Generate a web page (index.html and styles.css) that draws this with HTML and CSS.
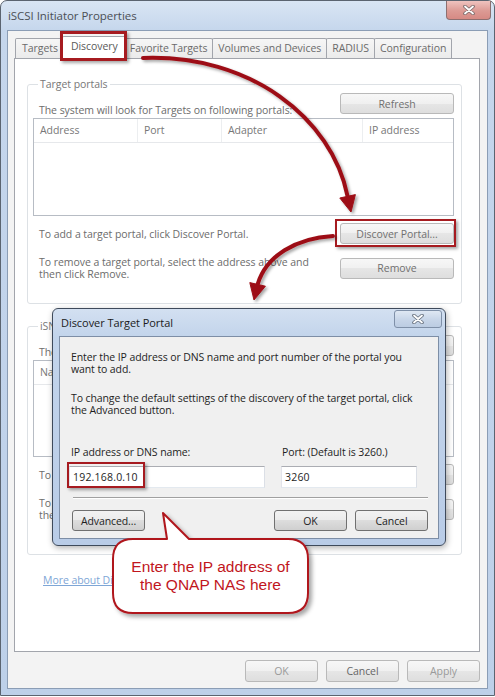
FILE: index.html
```html
<!DOCTYPE html>
<html lang="en">
<head>
<meta charset="UTF-8">
<meta name="viewport" content="width=device-width, initial-scale=1.0">
<title>iSCSI Initiator Properties</title>
<link rel="stylesheet" href="styles.css">
</head>
<body>
<div class="window">
    <div class="titlebar">
        <span class="title">iSCSI Initiator Properties</span>
        <span class="close-btn">
            <svg width="14" height="10" viewBox="0 0 14 10"><path class="x-out" d="M3 1.5 L11 8.5 M11 1.5 L3 8.5"/><path class="x-in" d="M3 1.5 L11 8.5 M11 1.5 L3 8.5"/></svg>
        </span>
    </div>
    <div class="client">
        <div class="tabs">
            <div class="tab">Targets</div>
            <div class="tab active">Discovery</div>
            <div class="tab">Favorite Targets</div>
            <div class="tab">Volumes and Devices</div>
            <div class="tab">RADIUS</div>
            <div class="tab">Configuration</div>
        </div>
        <div class="page">
            <fieldset class="group group-portals">
                <legend>Target portals</legend>
                <div class="row row-top">
                    <span class="note">The system will look for Targets on following portals:</span>
                    <button class="btn">Refresh</button>
                </div>
                <div class="listview">
                    <div class="lv-head cols-portals">
                        <span>Address</span><span>Port</span><span>Adapter</span><span>IP address</span>
                    </div>
                </div>
                <div class="row row-add">
                    <span class="note">To add a target portal, click Discover Portal.</span>
                    <button class="btn">Discover Portal...</button>
                </div>
                <div class="row row-remove">
                    <span class="note">To remove a target portal, select the address above and<br>then click Remove.</span>
                    <button class="btn">Remove</button>
                </div>
            </fieldset>
            <fieldset class="group group-isns">
                <legend>iSNS servers</legend>
                <div class="row row-top">
                    <span class="note">The system is registered on the following iSNS servers:</span>
                    <button class="btn">Refresh</button>
                </div>
                <div class="listview">
                    <div class="lv-head cols-isns">
                        <span>Name</span>
                    </div>
                </div>
                <div class="row row-add">
                    <span class="note">To add an iSNS server, click Add Server.</span>
                    <button class="btn">Add Server...</button>
                </div>
                <div class="row row-remove">
                    <span class="note">To remove an iSNS server, select the server above and<br>then click Remove.</span>
                    <button class="btn">Remove</button>
                </div>
            </fieldset>
            <a class="more-link" href="#">More about Discovery and iSNS</a>
        </div>
        <div class="footer">
            <button class="btn off">OK</button>
            <button class="btn">Cancel</button>
            <button class="btn off">Apply</button>
        </div>
    </div>
</div>

<div class="mark mark-tab"></div>
<div class="mark mark-discover"></div>

<svg class="arrows" width="495" height="697" viewBox="0 0 495 697">
    <defs>
        <filter id="shade" x="-20%" y="-20%" width="140%" height="140%">
            <feDropShadow dx="2" dy="2" stdDeviation="1.5" flood-color="#000" flood-opacity="0.35"/>
        </filter>
    </defs>
    <g filter="url(#shade)">
        <path class="arrow-line" d="M143 58 C 250 54, 332 118, 347.6 196.3"/>
        <polygon class="arrow-head" points="351,212 355.4,194.6 339.8,198"/>
        <path class="arrow-line" d="M333 236 C 296 238, 266 256, 257.6 284.4"/>
        <polygon class="arrow-head" points="254,300 265.4,286.2 249.8,282.6"/>
    </g>
</svg>

<div class="dialog">
    <div class="dlg-titlebar">
        <span class="dlg-title">Discover Target Portal</span>
        <span class="dlg-close">
            <svg width="14" height="10" viewBox="0 0 14 10"><path class="x-out" d="M3 1.5 L11 8.5 M11 1.5 L3 8.5"/><path class="x-in" d="M3 1.5 L11 8.5 M11 1.5 L3 8.5"/></svg>
        </span>
    </div>
    <div class="dlg-client">
        <p class="dlg-text">Enter the IP address or DNS name and port number of the portal you<br>want to add.</p>
        <p class="dlg-text second">To change the default settings of the discovery of the target portal, click<br>the Advanced button.</p>
        <div class="fields">
            <label class="field-label">IP address or DNS name:</label>
            <label class="field-label port-label">Port: (Default is 3260.)</label>
            <input class="textbox" type="text" value="192.168.0.10">
            <input class="textbox" type="text" value="3260">
        </div>
        <div class="separator"></div>
        <div class="dlg-buttons">
            <button class="btn dbtn">Advanced...</button>
            <span class="spacer"></span>
            <button class="btn dbtn">OK</button>
            <button class="btn dbtn">Cancel</button>
        </div>
    </div>
</div>

<div class="mark mark-ip"></div>

<svg class="callout-shape" width="495" height="697" viewBox="0 0 495 697">
    <defs>
        <filter id="bubble-shade" x="-20%" y="-20%" width="140%" height="150%">
            <feDropShadow dx="3" dy="3" stdDeviation="2" flood-color="#000" flood-opacity="0.35"/>
        </filter>
    </defs>
    <path filter="url(#bubble-shade)" d="M133 539 L167 539 L163 513 L189 539 L288 539 Q308 539 308 559 L308 593 Q308 613 288 613 L133 613 Q113 613 113 593 L113 559 Q113 539 133 539 Z"/>
</svg>
<div class="callout-text">Enter the IP address of<br>the QNAP NAS here</div>
</body>
</html>
```

FILE: styles.css
```css
* {
    box-sizing: border-box;
}

body {
    position: relative;
    margin: 0;
    width: 495px;
    height: 697px;
    overflow: hidden;
    background: #ffffff;
    font-family: "Open Sans", "Noto Sans", sans-serif;
    font-size: 10.5px;
    line-height: 12px;
    letter-spacing: -0.05px;
    color: #6c6c6c;
}

/* main window */
.window {
    display: flex;
    flex-direction: column;
    width: 495px;
    height: 696px;
    padding: 0 6px 6px 6px;
    border: 1px solid #5b6470;
    border-radius: 7px 7px 0 0;
    background: linear-gradient(to bottom, #d9e5f4 0, #c5d6ec 30px, #bdd0e9 100%);
}

.titlebar {
    display: flex;
    align-items: flex-start;
    height: 29px;
    flex-shrink: 0;
}

.title {
    padding-left: 1px;
    line-height: 29px;
    font-size: 11.5px;
    color: #4b4f55;
}

.close-btn {
    display: flex;
    align-items: center;
    justify-content: center;
    width: 45px;
    height: 19px;
    margin-left: auto;
    margin-right: -3px;
    border: 1px solid #8d6f70;
    border-top: none;
    border-radius: 0 0 4px 4px;
    background: linear-gradient(to bottom, #efc3bf, #dc9a94 55%, #d68a84);
}

.x-out {
    fill: none;
    stroke: #7b6a6a;
    stroke-width: 3.6;
    stroke-linecap: round;
}

.x-in {
    fill: none;
    stroke: #ffffff;
    stroke-width: 1.8;
    stroke-linecap: round;
}

.client {
    display: flex;
    flex-direction: column;
    flex: 1;
    padding: 0 7px 6px 6px;
    border: 1px solid #8b9db5;
    background: #f3f3f3;
}

/* tabs */
.tabs {
    position: relative;
    z-index: 2;
    display: flex;
    align-items: flex-end;
    height: 28px;
    margin-bottom: -1px;
    padding-left: 1px;
}

.tab {
    height: 20px;
    margin-bottom: 1px;
    padding: 0 5px;
    border: 1px solid #a2a5ac;
    border-bottom: none;
    border-radius: 2px 2px 0 0;
    background: linear-gradient(to bottom, #f6f6f6, #ebebeb);
    line-height: 19px;
    color: #6a6a6a;
    white-space: nowrap;
}

.tab:first-child {
    padding: 0 6px;
}

.tab + .tab {
    margin-left: -1px;
}

.tab.active {
    position: relative;
    z-index: 3;
    height: 23px;
    margin: 0 -2px 0 -3px;
    padding: 0 8px;
    background: #ffffff;
    line-height: 19px;
    color: #5a5a5a;
}

.page {
    flex: 1;
    padding: 18px 17px 0 12px;
    border: 1px solid #a2a5ac;
    background: #ffffff;
}

/* group boxes */
.group {
    margin: 0;
    padding: 2px 7px 23px 5px;
    border: 1px solid #dde1e5;
    border-radius: 3px;
}

.group legend {
    margin-left: 5px;
    padding: 0 2px;
    line-height: 14px;
    color: #777777;
}

.group-isns {
    margin-top: 15px;
    padding-bottom: 33px;
}

.row {
    display: flex;
    justify-content: space-between;
    align-items: center;
}

.note {
    padding-left: 6px;
}

.row-top .note {
    align-self: flex-end;
    margin-bottom: -2px;
}

.row-add {
    margin-top: 7px;
}

.row-remove {
    margin-top: 12px;
}

.btn {
    width: 114px;
    height: 21px;
    padding: 0;
    border: 1px solid #b9b9b9;
    border-radius: 3px;
    background: linear-gradient(to bottom, #f7f7f7, #f0f0f0 50%, #e6e6e6 50%, #dedede);
    font-family: inherit;
    font-size: 10.5px;
    letter-spacing: inherit;
    color: #707070;
}

.listview {
    height: 98px;
    margin-top: 4px;
    border: 1px solid #b7bcc4;
    background: #ffffff;
}

.group-isns .listview {
    height: 97px;
}

.lv-head {
    display: grid;
    height: 24px;
    border-bottom: 1px solid #e6e8eb;
    line-height: 23px;
    color: #777777;
}

.lv-head span {
    padding-left: 6px;
    border-right: 1px solid #eceef0;
}

.lv-head span:last-child {
    border-right: none;
}

.cols-portals {
    grid-template-columns: 104px 84px 141px 1fr;
}

.cols-isns {
    grid-template-columns: 1fr;
}

.more-link {
    display: block;
    width: max-content;
    margin: 19px 0 0 16px;
    color: #7ea6d6;
    text-decoration: underline;
}

.footer {
    display: flex;
    justify-content: flex-end;
    gap: 8px;
    margin-top: 8px;
}

.footer .btn {
    width: 73px;
    height: 22px;
    color: #666666;
}

.footer .btn.off {
    color: #9a9a9a;
}

/* red highlight boxes */
.mark {
    position: absolute;
    border: 2px solid #a61b20;
    box-shadow: 2px 2px 3px rgba(0, 0, 0, 0.35);
    z-index: 5;
}

.mark-tab {
    left: 60px;
    top: 31px;
    width: 67px;
    height: 30px;
    border-width: 3px;
}

.mark-discover {
    left: 335px;
    top: 219px;
    width: 121px;
    height: 28px;
}

.mark-ip {
    left: 67px;
    top: 462px;
    width: 78px;
    height: 26px;
    z-index: 12;
}

.arrows {
    position: absolute;
    left: 0;
    top: 0;
    z-index: 6;
}

.arrow-line {
    fill: none;
    stroke: #9d1016;
    stroke-width: 4;
    stroke-linecap: round;
}

.arrow-head {
    fill: #9d1016;
    stroke: #9d1016;
    stroke-width: 1;
    stroke-linejoin: round;
}

/* discover target portal dialog */
.dialog {
    position: absolute;
    left: 52px;
    top: 308px;
    z-index: 10;
    display: flex;
    flex-direction: column;
    width: 394px;
    height: 238px;
    padding: 0 6px 6px 6px;
    border: 1px solid #3e4a5b;
    border-radius: 6px;
    background: linear-gradient(to bottom, #d3e0f1 0, #c2d4eb 28px, #b9cce7 100%);
    box-shadow: 1px 2px 6px rgba(0, 0, 0, 0.3);
}

.dlg-titlebar {
    display: flex;
    align-items: flex-start;
    height: 27px;
    flex-shrink: 0;
}

.dlg-title {
    padding-left: 2px;
    line-height: 27px;
    font-size: 11px;
    color: #1b1b1b;
}

.dlg-close {
    display: flex;
    align-items: center;
    justify-content: center;
    width: 48px;
    height: 18px;
    margin: 1px -3px 0 auto;
    border: 1px solid #7f90a8;
    border-radius: 3px;
    background: linear-gradient(to bottom, #dfe8f3, #c7d5e8 55%, #bccce2);
}

.dlg-close .x-out {
    stroke: #66707e;
}

.dlg-client {
    flex: 1;
    display: flex;
    flex-direction: column;
    padding: 14px 10px 0 11px;
    border: 1px solid #7d8ea6;
    background: #f0f0f0;
    color: #1e1e1e;
    letter-spacing: -0.1px;
}

.dlg-text {
    margin: 0;
    white-space: nowrap;
}

.dlg-text.second {
    margin-top: 17px;
}

.fields {
    display: grid;
    grid-template-columns: 196px 136px;
    column-gap: 16px;
    row-gap: 8px;
    margin: 30px 0 0 -2px;
}

.field-label {
    padding-left: 2px;
    line-height: 12px;
}

.port-label {
    padding-left: 1px;
}

.textbox {
    height: 22px;
    padding: 0 3px;
    border: 1px solid;
    border-color: #abadb3 #dbdfe6 #e3e9ef #e2e3ea;
    background: #ffffff;
    font-family: inherit;
    font-size: 10.5px;
    letter-spacing: 0.2px;
    color: #1e1e1e;
    outline: none;
}

.separator {
    margin: 9px 0 0 2px;
    border-top: 1px solid #a0a0a0;
    border-bottom: 1px solid #ffffff;
}

.dlg-buttons {
    display: flex;
    gap: 8px;
    margin-top: 11px;
    padding-left: 1px;
}

.spacer {
    flex: 1;
}

.dbtn {
    width: 73px;
    height: 21px;
    border-color: #707070;
    background: linear-gradient(to bottom, #f2f2f2, #ebebeb 50%, #dddddd 50%, #cfcfcf);
    color: #1e1e1e;
}

/* callout */
.callout-shape {
    position: absolute;
    left: 0;
    top: 0;
    z-index: 14;
}

.callout-shape path {
    fill: #ffffff;
    stroke: #b0181e;
    stroke-width: 2;
    stroke-linejoin: round;
}

.callout-text {
    position: absolute;
    left: 113px;
    top: 539px;
    z-index: 15;
    display: flex;
    align-items: center;
    justify-content: center;
    width: 195px;
    height: 74px;
    font-family: "Liberation Sans", Arial, sans-serif;
    font-size: 15.5px;
    line-height: 18px;
    letter-spacing: 0;
    text-align: center;
    color: #c1161d;
}
```
